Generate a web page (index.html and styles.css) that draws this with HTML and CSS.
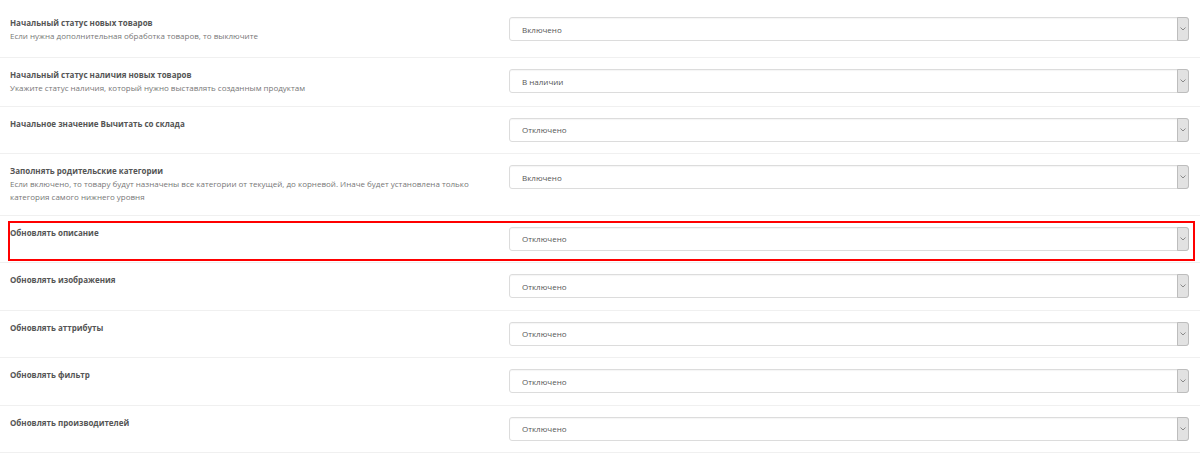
FILE: index.html
```html
<!DOCTYPE html>
<html lang="ru">
<head>
    <meta charset="UTF-8">
    <meta name="viewport" content="width=device-width, initial-scale=1.0">
    <title>Настройки импорта</title>
    <link rel="stylesheet" href="styles.css">
</head>
<body>

    <div class="settings">
        <!-- Статусы -->
        <div class="setting first">
            <div class="setting-label">
                <div class="title">Начальный статус новых товаров</div>
                <div class="help">Если нужна дополнительная обработка товаров, то выключите</div>
            </div>
            <div class="select"><span class="value">Включено</span><span class="arrow"><svg viewBox="0 0 6 4" width="6" height="4"><path d="M0.5 0.5 L3 3 L5.5 0.5" /></svg></span></div>
        </div>

        <div class="setting">
            <div class="setting-label">
                <div class="title">Начальный статус наличия новых товаров</div>
                <div class="help">Укажите статус наличия, который нужно выставлять созданным продуктам</div>
            </div>
            <div class="select"><span class="value">В наличии</span><span class="arrow"><svg viewBox="0 0 6 4" width="6" height="4"><path d="M0.5 0.5 L3 3 L5.5 0.5" /></svg></span></div>
        </div>

        <div class="setting">
            <div class="setting-label">
                <div class="title">Начальное значение Вычитать со склада</div>
            </div>
            <div class="select"><span class="value">Отключено</span><span class="arrow"><svg viewBox="0 0 6 4" width="6" height="4"><path d="M0.5 0.5 L3 3 L5.5 0.5" /></svg></span></div>
        </div>

        <div class="setting">
            <div class="setting-label">
                <div class="title">Заполнять родительские категории</div>
                <div class="help">Если включено, то товару будут назначены все категории от текущей, до корневой. Иначе будет установлена только категория самого нижнего уровня</div>
            </div>
            <div class="select"><span class="value">Включено</span><span class="arrow"><svg viewBox="0 0 6 4" width="6" height="4"><path d="M0.5 0.5 L3 3 L5.5 0.5" /></svg></span></div>
        </div>

        <!-- Обновление -->
        <div class="setting highlighted">
            <div class="setting-label">
                <div class="title">Обновлять описание</div>
            </div>
            <div class="select"><span class="value">Отключено</span><span class="arrow"><svg viewBox="0 0 6 4" width="6" height="4"><path d="M0.5 0.5 L3 3 L5.5 0.5" /></svg></span></div>
        </div>

        <div class="setting">
            <div class="setting-label">
                <div class="title">Обновлять изображения</div>
            </div>
            <div class="select"><span class="value">Отключено</span><span class="arrow"><svg viewBox="0 0 6 4" width="6" height="4"><path d="M0.5 0.5 L3 3 L5.5 0.5" /></svg></span></div>
        </div>

        <div class="setting">
            <div class="setting-label">
                <div class="title">Обновлять аттрибуты</div>
            </div>
            <div class="select"><span class="value">Отключено</span><span class="arrow"><svg viewBox="0 0 6 4" width="6" height="4"><path d="M0.5 0.5 L3 3 L5.5 0.5" /></svg></span></div>
        </div>

        <div class="setting">
            <div class="setting-label">
                <div class="title">Обновлять фильтр</div>
            </div>
            <div class="select"><span class="value">Отключено</span><span class="arrow"><svg viewBox="0 0 6 4" width="6" height="4"><path d="M0.5 0.5 L3 3 L5.5 0.5" /></svg></span></div>
        </div>

        <div class="setting">
            <div class="setting-label">
                <div class="title">Обновлять производителей</div>
            </div>
            <div class="select"><span class="value">Отключено</span><span class="arrow"><svg viewBox="0 0 6 4" width="6" height="4"><path d="M0.5 0.5 L3 3 L5.5 0.5" /></svg></span></div>
        </div>
    </div>

</body>
</html>
```

FILE: styles.css
```css
/* General Styles */
body {
    font-family: "Open Sans", "Noto Sans", sans-serif;
    background-color: #fff;
    margin: 0;
    padding: 0;
}

.settings {
    width: 1200px;
}

.setting {
    display: grid;
    grid-template-columns: 509px 1fr;
    align-items: start;
    padding: 11px 11px 11.5px 0;
    border-bottom: 1px solid #f0f0f0;
}

.setting.first {
    padding-top: 17px;
    padding-bottom: 15px;
}

.setting-label {
    padding-left: 10px;
    padding-right: 20px;
}

.title {
    font-size: 8px;
    line-height: 12px;
    font-weight: 700;
    color: #555;
}

.help {
    font-size: 8px;
    line-height: 13px;
    color: #777;
}

/* Select box */
.select {
    display: flex;
    align-items: stretch;
    height: 24px;
    box-sizing: border-box;
    border: 1px solid #dcdcdc;
    border-radius: 3px;
    box-shadow: inset 0 1px 1px rgba(0, 0, 0, 0.04);
    background-color: #fff;
}

.select .value {
    flex: 1;
    display: flex;
    align-items: center;
    padding-left: 12px;
    font-size: 8px;
    color: #555;
}

.select .arrow {
    width: 10px;
    margin: -1px -1px -1px 0;
    display: flex;
    align-items: center;
    justify-content: center;
    background-color: #e2e2e2;
    border: 1px solid #bdbdbd;
    border-radius: 0 3px 3px 0;
}

.select .arrow svg {
    fill: none;
    stroke: #8a8a8a;
    stroke-width: 1;
}

/* Highlight */
.highlighted {
    position: relative;
}

.highlighted::after {
    content: "";
    position: absolute;
    top: 5px;
    bottom: 1px;
    left: 8px;
    right: 5px;
    border: 2px solid #f00;
    pointer-events: none;
}
```
